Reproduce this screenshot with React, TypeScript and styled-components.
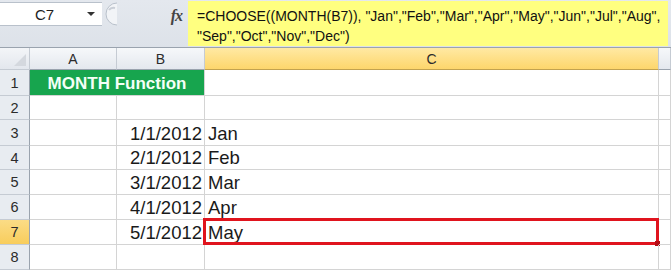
import React from "react";
import styled, { createGlobalStyle } from "styled-components";

const GlobalStyle = createGlobalStyle`
  html, body {
    margin: 0;
    padding: 0;
    background: #ffffff;
  }
  body {
    font-family: "Liberation Sans", Arial, sans-serif;
  }
`;

const Sheet = styled.div`
  width: 671px;
  height: 271px;
  overflow: hidden;
  background: #ffffff;
`;

const FormulaBar = styled.div`
  display: flex;
  height: 48px;
  background: linear-gradient(#e4e8ee, #dde2e9);
  border-bottom: 1px solid #9aa3ae;
  box-sizing: border-box;
`;

const NameColumn = styled.div`
  width: 102px;
  display: flex;
  flex-direction: column;
  padding-top: 2px;
`;

const NameBox = styled.div`
  height: 24px;
  display: flex;
  align-items: center;
  justify-content: space-between;
  padding: 0 7px 0 35px;
  background: #ffffff;
  border-top: 1px solid #b9c1cb;
  border-bottom: 1px solid #b9c1cb;
  box-sizing: border-box;
  font-size: 15px;
  color: #1e1e1e;
`;

const Arrow = styled.span`
  width: 0;
  height: 0;
  border-left: 4px solid transparent;
  border-right: 4px solid transparent;
  border-top: 4px solid #333;
`;

const Splitter = styled.div`
  width: 86px;
  padding-top: 2px;
  display: flex;
  align-items: flex-start;
  justify-content: space-between;
`;

const Fx = styled.span`
  margin-top: 5px;
  margin-right: 6px;
  font-family: "Liberation Serif", "Times New Roman", serif;
  font-style: italic;
  font-weight: bold;
  font-size: 16px;
  color: #444;
  letter-spacing: -1px;
`;

const FormulaText = styled.div`
  flex: 1;
  margin-right: 3px;
  margin-top: 1px;
  margin-bottom: 1px;
  background: #ffff80;
  padding: 6px 0 0 9px;
  font-size: 14px;
  line-height: 19.5px;
  color: #111;
  white-space: pre;
`;

const Grid = styled.div`
  display: grid;
  grid-template-columns: 30px 87px 88px 454px 1fr;
  grid-template-rows: 22px 26px 24px 26px 24px 25px 25px 25px 25px;
`;

const Corner = styled.div`
  background: linear-gradient(#f3f5f8, #e3e7ed);
  border-right: 1px solid #c5cbd3;
  border-bottom: 1px solid #c5cbd3;
  position: relative;
  &::after {
    content: "";
    position: absolute;
    right: 3px;
    bottom: 3px;
    border-left: 12px solid transparent;
    border-bottom: 12px solid #d4d8de;
  }
`;

const ColHeader = styled.div<{ $active?: boolean }>`
  display: flex;
  align-items: center;
  justify-content: center;
  font-size: 14px;
  color: #2b2b2b;
  background: ${(p) =>
    p.$active
      ? "linear-gradient(#ffe9a3, #fdd66c)"
      : "linear-gradient(#f6f8fa, #e4e8ee)"};
  border-right: 1px solid #c5cbd3;
  border-bottom: 1px solid ${(p) => (p.$active ? "#c2a24f" : "#9aa3ae")};
  box-sizing: border-box;
`;

const RowHeader = styled.div<{ $active?: boolean }>`
  display: flex;
  align-items: center;
  justify-content: center;
  font-size: 14.5px;
  color: #2b2b2b;
  background: ${(p) =>
    p.$active ? "linear-gradient(#fbdc86, #f8cd5c)" : "#e8ecf1"};
  border-right: 1px solid #9aa3ae;
  border-bottom: 1px solid #c5cbd3;
  box-sizing: border-box;
`;

const Cell = styled.div<{ $align?: "left" | "right" }>`
  display: flex;
  align-items: flex-end;
  justify-content: ${(p) => (p.$align === "right" ? "flex-end" : "flex-start")};
  padding: 0 2px 0 3px;
  font-size: 18.5px;
  line-height: 22px;
  color: #1a1a1a;
  border-right: 1px solid #d4d4d4;
  border-bottom: 1px solid #d4d4d4;
  box-sizing: border-box;
  position: relative;
`;

const Banner = styled.div`
  grid-column: span 2;
  display: flex;
  align-items: center;
  justify-content: center;
  padding-top: 3px;
  background: #17a54e;
  color: #f4fff7;
  font-weight: bold;
  font-size: 17px;
  border-bottom: 1px solid #d4d4d4;
  border-right: 1px solid #d4d4d4;
  box-sizing: border-box;
`;

const Selection = styled.div`
  position: absolute;
  left: -2px;
  top: -2px;
  right: -1px;
  bottom: -1px;
  border: 3px solid #e0141e;
  pointer-events: none;
  &::after {
    content: "";
    position: absolute;
    right: -4px;
    bottom: -4px;
    width: 5px;
    height: 5px;
    background: #b40d16;
  }
`;

const rows = [
  { n: 3, date: "1/1/2012", month: "Jan" },
  { n: 4, date: "2/1/2012", month: "Feb" },
  { n: 5, date: "3/1/2012", month: "Mar" },
  { n: 6, date: "4/1/2012", month: "Apr" },
  { n: 7, date: "5/1/2012", month: "May" },
];

const formula =
  '=CHOOSE((MONTH(B7)), "Jan","Feb","Mar","Apr","May","Jun","Jul","Aug",\n"Sep","Oct","Nov","Dec")';

export default function App() {
  return (
    <Sheet>
      <GlobalStyle />
      <FormulaBar>
        <NameColumn>
          <NameBox>
            <span>C7</span>
            <Arrow />
          </NameBox>
        </NameColumn>
        <Splitter>
          <svg width="16" height="24" viewBox="0 0 16 24">
            <path
              d="M15 1 A 11 11 0 0 0 15 23"
              fill="#f2f4f7"
              stroke="#b9c1cb"
              strokeWidth="1"
            />
            <path d="M7 8 q2 -3 6 -2" fill="none" stroke="#c9ced6" strokeWidth="2" />
          </svg>
          <Fx>fx</Fx>
        </Splitter>
        <FormulaText>{formula}</FormulaText>
      </FormulaBar>
      <Grid>
        <Corner />
        <ColHeader>A</ColHeader>
        <ColHeader>B</ColHeader>
        <ColHeader $active>C</ColHeader>
        <ColHeader />

        <RowHeader>1</RowHeader>
        <Banner>MONTH Function</Banner>
        <Cell />
        <Cell />

        <RowHeader>2</RowHeader>
        <Cell />
        <Cell />
        <Cell />
        <Cell />

        {rows.map((r) => (
          <React.Fragment key={r.n}>
            <RowHeader $active={r.n === 7}>{r.n}</RowHeader>
            <Cell />
            <Cell $align="right">{r.date}</Cell>
            <Cell>
              {r.month}
              {r.n === 7 && <Selection />}
            </Cell>
            <Cell />
          </React.Fragment>
        ))}

        <RowHeader>8</RowHeader>
        <Cell />
        <Cell />
        <Cell />
        <Cell />
      </Grid>
    </Sheet>
  );
}
